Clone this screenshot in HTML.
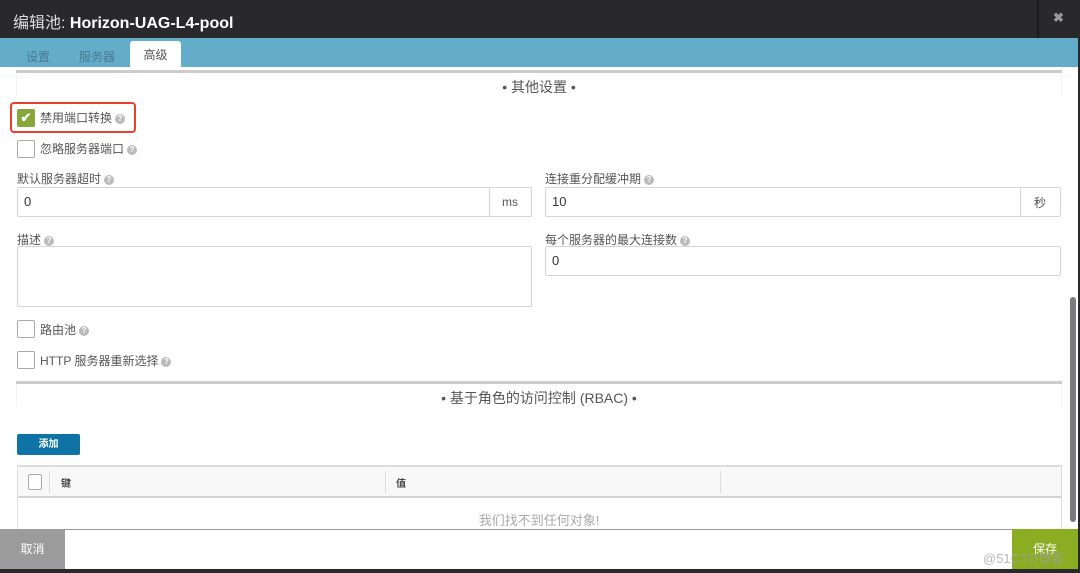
<!DOCTYPE html><html><head><meta charset="utf-8"><style>
*{box-sizing:border-box;margin:0;padding:0}
body{width:1080px;height:573px;overflow:hidden;background:#fff;font-family:"Liberation Sans","Noto Sans CJK SC",sans-serif;color:#444;position:relative;font-size:12px}
.a{position:absolute}
.q{display:inline-block;width:10px;height:10px;border-radius:50%;background:#bbb;color:#fff;font-size:8px;line-height:10px;text-align:center;vertical-align:middle;margin-left:3px;font-weight:bold}
.cb{width:18px;height:18px;border:1px solid #aaa;border-radius:2px;background:#fff}
.inp{border:1px solid #d4d4d4;border-radius:2px;background:#fff;height:30px;font-size:13px;color:#333;padding:0 6px;line-height:28px}
.lbl{font-size:12px;color:#555}
</style></head><body>
<div class="a" style="left:0;top:0;width:1080px;height:38px;background:#29292b"></div>
<div class="a" style="left:13px;top:9px;font-size:16px;color:#ddd">编辑池: <b style="color:#fff;font-weight:bold">Horizon-UAG-L4-pool</b></div>
<div class="a" style="left:1037px;top:0;width:2px;height:38px;background:#1a1a1a"></div>
<div class="a" style="left:1053px;top:10px;font-size:13px;color:#999;font-weight:bold">✖</div>
<div class="a" style="left:0;top:38px;width:1080px;height:29px;background:#63acca"></div>
<div class="a" style="left:26px;top:48px;font-size:12px;color:#4a7a90">设置</div>
<div class="a" style="left:79px;top:48px;font-size:12px;color:#4a7a90">服务器</div>
<div class="a" style="left:130px;top:41px;width:51px;height:27px;background:#fff;border-radius:3px 3px 0 0;text-align:center;line-height:28px;font-size:12px;color:#555">高级</div>
<div class="a" style="left:16px;top:70px;width:1046px;height:3px;background:#ccc"></div>
<div class="a" style="left:16px;top:73px;width:1046px;height:22px;border-left:1px solid #f2f2f2;border-right:1px solid #f2f2f2"></div>
<div class="a" style="left:0;top:77px;width:1078px;text-align:center;font-size:14px;color:#555">• 其他设置 •</div>
<div class="a" style="left:10px;top:102px;width:126px;height:31px;border:2px solid #e8402a;border-radius:4px"></div>
<div class="a" style="left:17px;top:109px;width:18px;height:18px;background:#86a83a;border-radius:2px;color:#fff;font-size:13px;text-align:center;line-height:18px;font-weight:bold">✔</div>
<div class="a lbl" style="left:40px;top:109px">禁用端口转换<span class="q">?</span></div>
<div class="a cb" style="left:17px;top:140px"></div>
<div class="a lbl" style="left:40px;top:140px">忽略服务器端口<span class="q">?</span></div>
<div class="a lbl" style="left:17px;top:170px">默认服务器超时<span class="q">?</span></div>
<div class="a inp" style="left:17px;top:187px;width:515px">0</div>
<div class="a" style="left:489px;top:187px;width:1px;height:30px;background:#d4d4d4"></div>
<div class="a" style="left:502px;top:195px;font-size:12px;color:#555">ms</div>
<div class="a lbl" style="left:545px;top:170px">连接重分配缓冲期<span class="q">?</span></div>
<div class="a inp" style="left:545px;top:187px;width:516px">10</div>
<div class="a" style="left:1020px;top:187px;width:1px;height:30px;background:#d4d4d4"></div>
<div class="a" style="left:1034px;top:194px;font-size:12px;color:#555">秒</div>
<div class="a lbl" style="left:17px;top:231px">描述<span class="q">?</span></div>
<div class="a inp" style="left:17px;top:246px;width:515px;height:61px"></div>
<div class="a lbl" style="left:545px;top:231px">每个服务器的最大连接数<span class="q">?</span></div>
<div class="a inp" style="left:545px;top:246px;width:516px">0</div>
<div class="a cb" style="left:17px;top:320px"></div>
<div class="a lbl" style="left:40px;top:321px">路由池<span class="q">?</span></div>
<div class="a cb" style="left:17px;top:351px"></div>
<div class="a lbl" style="left:40px;top:352px">HTTP 服务器重新选择<span class="q">?</span></div>
<div class="a" style="left:16px;top:381px;width:1046px;height:3px;background:#ccc"></div>
<div class="a" style="left:16px;top:384px;width:1046px;height:22px;border-left:1px solid #f2f2f2;border-right:1px solid #f2f2f2"></div>
<div class="a" style="left:0;top:388px;width:1078px;text-align:center;font-size:14px;color:#555">• 基于角色的访问控制 (RBAC) •</div>
<div class="a" style="left:17px;top:434px;width:63px;height:21px;background:#0f73a6;border-radius:2px;color:#fff;font-size:10px;text-align:center;line-height:21px;font-weight:bold">添加</div>
<div class="a" style="left:17px;top:465px;width:1045px;height:70px;border:1px solid #ddd;border-top:2px solid #ddd"></div>
<div class="a" style="left:18px;top:467px;width:1043px;height:31px;background:#f8f8f8;border-bottom:2px solid #d4d4d4"></div>
<div class="a cb" style="left:28px;top:474px;width:14px;height:16px"></div>
<div class="a" style="left:49px;top:471px;width:1px;height:22px;background:#ddd"></div>
<div class="a" style="left:385px;top:471px;width:1px;height:22px;background:#ddd"></div>
<div class="a" style="left:720px;top:471px;width:1px;height:22px;background:#ddd"></div>
<div class="a" style="left:61px;top:475px;font-size:10px;color:#444;font-weight:bold">键</div>
<div class="a" style="left:396px;top:475px;font-size:10px;color:#444;font-weight:bold">值</div>
<div class="a" style="left:0;top:510px;width:1078px;text-align:center;font-size:13px;color:#aaa">我们找不到任何对象!</div>
<div class="a" style="left:1070px;top:297px;width:6px;height:225px;background:#7a7a7a;border-radius:3px"></div>
<div class="a" style="left:1078px;top:0;width:2px;height:573px;background:#29292b"></div>
<div class="a" style="left:0;top:529px;width:1078px;height:40px;background:#fff;border-top:1px solid #999"></div>
<div class="a" style="left:0;top:529px;width:65px;height:40px;background:#9b9b9b;color:#fff;font-size:12px;text-align:center;line-height:40px">取消</div>
<div class="a" style="left:1012px;top:529px;width:66px;height:40px;background:#8aad22;color:#fff;font-size:12px;text-align:center;line-height:40px">保存</div>
<div class="a" style="left:983px;top:548px;font-size:13px;color:rgba(160,160,160,.75)">@51CTO博客</div>
<div class="a" style="left:0;top:569px;width:1080px;height:4px;background:#29292b"></div>
</body></html>
